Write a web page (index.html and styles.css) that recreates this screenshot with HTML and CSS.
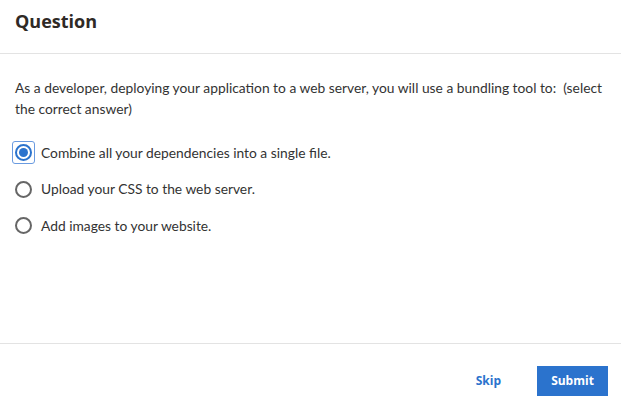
FILE: index.html
```html
<!DOCTYPE html>
<html>
<head>
<meta charset="utf-8">
<link rel="stylesheet" href="styles.css">
</head>
<body>
<div class="dialog">
  <header class="head">
    <h1 class="title">Question</h1>
  </header>
  <main class="body">
    <p class="prompt">As a developer, deploying your application to a web server, you will use a bundling tool to:&nbsp; (select the correct answer)</p>
    <div class="options">
      <label class="option">
        <span class="focusbox"><span class="radio checked"><span class="dot"></span></span></span>
        <span class="label">Combine all your dependencies into a single file.</span>
      </label>
      <label class="option">
        <span class="radio"></span>
        <span class="label">Upload your CSS to the web server.</span>
      </label>
      <label class="option">
        <span class="radio"></span>
        <span class="label">Add images to your website.</span>
      </label>
    </div>
  </main>
  <footer class="foot">
    <button class="btn skip">Skip</button>
    <button class="btn submit">Submit</button>
  </footer>
</div>
</body>
</html>
```

FILE: styles.css
```css
* { box-sizing: border-box; }
html, body { margin: 0; padding: 0; background: #fff; }
body { width: 621px; height: 412px; overflow: hidden; font-family: "Source Sans Pro", Lato, "Noto Sans", sans-serif; }
.dialog { display: flex; flex-direction: column; height: 412px; }
.head { height: 54px; border-bottom: 1px solid #e3e3e3; padding: 0 15px; display: flex; align-items: center; }
.title { margin: 0; font-family: "Open Sans", sans-serif; font-weight: 700; font-size: 18px; color: #2f2a26; line-height: 1; position: relative; top: -6px; }
.body { flex: 1; padding: 23px 15px 0 15px; border-bottom: 1px solid #e3e3e3; }
.prompt { margin: 0; font-size: 13.8px; line-height: 21px; color: #333; }
.options { display: flex; flex-direction: column; gap: 13.5px; margin-top: 22px; }
.option { display: flex; align-items: center; gap: 9px; height: 23px; font-size: 13.8px; color: #333; }
.radio { width: 17px; height: 17px; border: 2px solid #666; border-radius: 50%; display: flex; align-items: center; justify-content: center; flex: none; }
.radio.checked { border-color: #2b73cd; }
.radio .dot { width: 9px; height: 9px; border-radius: 50%; background: #2b73cd; }
.focusbox { display: flex; padding: 2px; border: 1px solid #6a9be0; border-radius: 3px; margin: 0 -3px 0 -3px; flex: none; }
.option .label { line-height: 1; }
.foot { height: 68px; display: flex; align-items: center; justify-content: flex-end; gap: 18px; padding: 5px 13px 0 0; }
.btn { font-family: "Open Sans", sans-serif; font-weight: 700; font-size: 12px; border: none; cursor: pointer; }
.skip { background: none; color: #2b73cd; padding: 0 18px; height: 30px; }
.submit { background: #2b73cd; color: #fff; width: 71px; height: 30px; }
```
